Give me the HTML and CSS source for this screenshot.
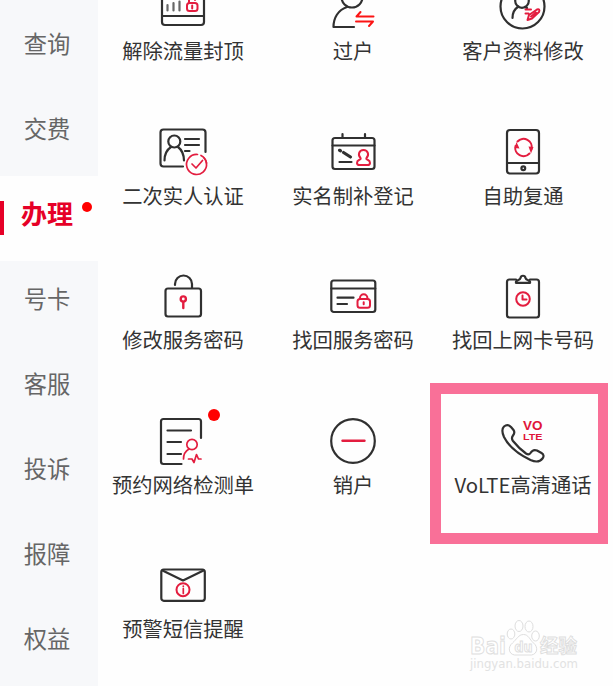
FILE: index.html
```html
<!DOCTYPE html>
<html lang="zh-CN">
<head>
    <meta charset="UTF-8">
    <meta name="viewport" content="width=device-width, initial-scale=1.0">
    <title>业务办理</title>
    <link rel="stylesheet" href="styles.css">
</head>
<body>
    <div class="container">
        <nav class="sidebar">
            <a class="tab">查询</a>
            <a class="tab">交费</a>
            <a class="tab active">办理<span class="dot"></span></a>
            <a class="tab">号卡</a>
            <a class="tab">客服</a>
            <a class="tab">投诉</a>
            <a class="tab">报障</a>
            <a class="tab">权益</a>
        </nav>

        <main class="services">
            <div class="service">
                <svg class="icon" viewBox="0 0 60 60">
                    <rect x="9" y="13" width="42" height="35" rx="3"/>
                    <path d="M9 39h42"/>
                    <path class="bars" d="M14.500 28v5.500M20.500 26v7.500M26.500 24.500v9"/>
                    <g class="red"><rect x="34" y="26" width="10.500" height="8" rx="2.500"/><path d="M36 26v-3a3 3 0 0 1 6 0M39.200 28.500v3"/></g>
                </svg>
                <span class="label">解除流量封顶</span>
            </div>
            <div class="service">
                <svg class="icon" viewBox="0 0 60 60">
                    <circle cx="29" cy="20" r="10.500"/>
                    <path d="M24 30C15 33 10.500 41 10.500 50H31"/>
                    <path class="red bright" d="M50.500 39.500H33.500l4-4.500M33 44.500h17l-4 4.500"/>
                </svg>
                <span class="label">过户</span>
            </div>
            <div class="service">
                <svg class="icon" viewBox="0 0 60 60">
                    <circle cx="29.500" cy="29.500" r="22"/>
                    <circle cx="29" cy="24" r="6.800"/>
                    <path d="M25.500 29.500C21.500 32 19.500 36 19.500 41M32 30l2 1"/>
                    <path class="red" d="M32.500 32.500h5.500M32.500 36.500h3M34.500 43l1.500-5 8-5.500c2-1 3 .5 2 2.500l-7 6.500zM38 39.500l5-4"/>
                </svg>
                <span class="label">客户资料修改</span>
            </div>

            <div class="service">
                <svg class="icon" viewBox="0 0 60 60">
                    <path d="M30 44.500H10.500a3 3 0 0 1-3-3V10.500a3 3 0 0 1 3-3h39a3 3 0 0 1 3 3V30"/>
                    <circle cx="21.300" cy="19.500" r="6"/>
                    <path d="M18 25C13.500 28 11.500 32 11.500 38.500M25 25c4 3 5.800 7 6 13.500M32 17h14M32 23h14M32 29h4.500"/>
                    <g class="red thin"><path d="M48 33.500A10 10 0 1 1 44.500 32.500M39 42l4 4 6.500-7.500"/><path d="M51 36q2 2 2.500 5"/></g>
                </svg>
                <span class="label">二次实人认证</span>
            </div>
            <div class="service">
                <svg class="icon" viewBox="0 0 60 60">
                    <rect x="9.500" y="16" width="42" height="31" rx="2.500"/>
                    <path d="M9.500 23.500h42M19.500 12v4M42 12v4M16.500 40h12"/>
                    <path class="pen" d="M16.500 28.300l1 .5M20.500 30.500l7 4.500"/>
                    <path class="red" d="M37.500 36c-3-3-1.500-8 3-8s6 5 3 8c-.5 1 0 1.500 1.500 2 2.500 1 3 5-.5 5H36.500c-3.500 0-3-4-.5-5 1.500-.5 2-1 1.500-2z"/>
                </svg>
                <span class="label">实名制补登记</span>
            </div>
            <div class="service">
                <svg class="icon" viewBox="0 0 60 60">
                    <rect x="14" y="8" width="32" height="43.500" rx="3"/>
                    <path d="M14 41h32"/>
                    <circle cx="30.300" cy="46.300" r="1.900"/>
                    <path class="red" d="M24.500 19.500A8.200 8.200 0 0 1 38.500 27M36.500 31.500A8.200 8.200 0 0 1 22.500 24"/>
                    <path class="red-fill" d="M35.500 24.500l5 .5-2.500 6.500zM21.500 26l2-6 3 6.500z"/>
                </svg>
                <span class="label">自助复通</span>
            </div>

            <div class="service">
                <svg class="icon" viewBox="0 0 60 60">
                    <rect x="12.500" y="22.500" width="35.500" height="28" rx="2.500"/>
                    <path d="M22 19v-1a8.500 8.500 0 0 1 17 0v4"/>
                    <g class="red key"><circle cx="30.300" cy="33" r="2.600"/><path d="M30.300 36v6"/></g>
                </svg>
                <span class="label">修改服务密码</span>
            </div>
            <div class="service">
                <svg class="icon" viewBox="0 0 60 60">
                    <rect x="8.300" y="14.500" width="44" height="31.500" rx="2.500"/>
                    <path d="M8.300 22.500h44M14.500 31.700h16M14.500 38h9.500"/>
                    <g class="red"><rect x="34.500" y="33" width="12.500" height="8.700" rx="2.500"/><path d="M37 33v-1a3.700 3.700 0 0 1 7.400 0v1M40.700 36.300v2"/></g>
                </svg>
                <span class="label">找回服务密码</span>
            </div>
            <div class="service">
                <svg class="icon" viewBox="0 0 60 60">
                    <path d="M23 13.500h-6.500a2.500 2.500 0 0 0-2.500 2.500v33a2.500 2.500 0 0 0 2.500 2.500h27a2.500 2.500 0 0 0 2.500-2.500v-33a2.500 2.500 0 0 0-2.500-2.500H37"/>
                    <path d="M23 16.800c-1-3 4-1.800 4.500-4.800.5-3 4.500-3 5 0 .5 3 5.500 1.800 4.500 4.800z"/>
                    <g class="red"><circle cx="30" cy="33" r="6.800"/><path d="M29.500 29.500v4h4"/></g>
                </svg>
                <span class="label">找回上网卡号码</span>
            </div>

            <div class="service">
                <svg class="icon" viewBox="0 0 60 60">
                    <path d="M28.500 53H10.500a2.500 2.500 0 0 1-2.500-2.500v-40a2.500 2.500 0 0 1 2.500-2.500h35a2.500 2.500 0 0 1 2.500 2.500V27M14.500 19.500H38M14.500 31h13.500M14.500 43h13.500"/>
                    <g class="red thin"><circle cx="39" cy="33.500" r="5.200"/><path d="M36 38c-3.500 2-5.500 5-5.500 10M35.500 48h3.500l2 3.500 2.500-8 2 4.500h2.500"/></g>
                </svg>
                <span class="dot"></span>
                <span class="label">预约网络检测单</span>
            </div>
            <div class="service">
                <svg class="icon" viewBox="0 0 60 60">
                    <circle cx="30" cy="30" r="21.800"/>
                    <path class="red key" d="M19.500 29.800h22"/>
                </svg>
                <span class="label">销户</span>
            </div>
            <div class="service">
                <svg class="icon" viewBox="0 0 60 60">
                    <path d="M11 15.500c2.500-2 5-1.500 7 .5l2.500 3c1.500 2 1 3.500-.5 5.500-1.500 2-1.500 3.500 0 5.500 4 5 8 9 13 12.500 2 1.300 3.500 1 4.500-.5 1.500-2.500 4-3.500 6.500-2.500l4.500 2.500c2.500 1.500 2.500 3.500 1 5.500-3 4-7.500 3.500-12 1.500C25 43 15.500 35 11 26c-2-4.500-2.500-8 0-10.500z"/>
                    <text class="volte-top" x="30" y="19.300" textLength="19.500" lengthAdjust="spacingAndGlyphs">VO</text>
                    <text class="volte-bottom" x="30" y="29.300" textLength="19.500" lengthAdjust="spacingAndGlyphs">LTE</text>
                </svg>
                <span class="label">VoLTE高清通话</span>
                <div class="highlight"></div>
            </div>

            <div class="service">
                <svg class="icon" viewBox="0 0 60 60">
                    <rect x="8.300" y="14.500" width="43.500" height="31.300" rx="2.500"/>
                    <path d="M9.500 15.500L30 25.500 50.500 15.500"/>
                    <g class="red"><circle cx="30" cy="34.700" r="6.500"/><path class="thin" d="M30.300 31v.5M30.300 33.500v5"/></g>
                </svg>
                <span class="label">预警短信提醒</span>
            </div>
        </main>
    </div>

    <div class="watermark">
        <svg viewBox="0 0 120 60">
            <text class="brand" x="3" y="39.500" textLength="36" lengthAdjust="spacingAndGlyphs">Bai</text>
            <ellipse cx="44" cy="20" rx="3.800" ry="5"/>
            <ellipse cx="52" cy="12" rx="4" ry="5.500"/>
            <ellipse cx="62" cy="12.500" rx="4" ry="5.500"/>
            <ellipse cx="68.500" cy="22" rx="3.800" ry="5"/>
            <path d="M56.500 20.500c5 0 6 5 10 8.500 5 4 4 11-2 12h-17c-6-1-7-8-2-12 4-3.500 6-8.500 11-8.500z"/>
            <text class="du" x="47.500" y="38" textLength="18" lengthAdjust="spacingAndGlyphs">du</text>
            <text class="brand cn" x="73" y="39" textLength="37" lengthAdjust="spacingAndGlyphs">经验</text>
            <text class="url" x="3" y="54" textLength="108" lengthAdjust="spacingAndGlyphs">jingyan.baidu.com</text>
        </svg>
    </div>
</body>
</html>
```

FILE: styles.css
```css
* {
    box-sizing: border-box;
}
body {
    font-family: "Noto Sans CJK SC", "Noto Sans", sans-serif;
    margin: 0;
    height: 686px;
    overflow: hidden;
    background: #fefefe;
    color: #333;
}
.container {
    display: flex;
    width: 608px;
    height: 686px;
    overflow: hidden;
}
.sidebar {
    width: 98px;
    flex-shrink: 0;
    padding-top: 6px;
    background: #f7f8fa;
}
.tab {
    display: flex;
    position: relative;
    align-items: center;
    justify-content: center;
    height: 85px;
    padding: 0 4px 12px 0;
    font-size: 23.3px;
    line-height: 30px;
    color: #666;
}
.tab.active {
    background: #fefefe;
    font-size: 26px;
    font-weight: bold;
    color: #e60027;
}
.tab.active::before {
    content: "";
    position: absolute;
    left: 0;
    top: 25px;
    width: 4px;
    height: 34px;
    background: #e60027;
}
.dot {
    position: absolute;
    width: 12px;
    height: 12px;
    border-radius: 50%;
    background: #ff0000;
}
.tab .dot {
    width: 10px;
    height: 10px;
    left: 82px;
    top: 26px;
}
.services {
    display: grid;
    grid-template-columns: repeat(3, 170px);
    grid-auto-rows: 144.5px;
    /* list is scrolled, first row is cut off at the top */
    margin-top: -61px;
}
.service {
    display: flex;
    position: relative;
    flex-direction: column;
    align-items: center;
    padding-top: 38px;
}
.service .dot {
    left: 110px;
    top: 36px;
}
.icon {
    width: 60px;
    height: 60px;
    flex-shrink: 0;
    fill: none;
    stroke: #303030;
    stroke-width: 2.2;
    stroke-linecap: round;
    stroke-linejoin: round;
}
.icon .red {
    stroke: #e31d3f;
    stroke-width: 2;
}
.icon .bright {
    stroke: #fb1414;
}
.icon .key {
    stroke-width: 2.4;
}
.icon .thin {
    stroke-width: 1.7;
}
.icon .pen {
    stroke-width: 3.2;
}
.icon .bars {
    stroke: #666;
}
.icon .red-fill {
    fill: #e31d3f;
    stroke: none;
}
.icon text {
    font-family: "Liberation Sans", sans-serif;
    font-weight: bold;
    fill: #e0163a;
    stroke: none;
}
.volte-top {
    font-size: 12.5px;
}
.volte-bottom {
    font-size: 8.8px;
}
.label {
    margin-top: -1px;
    font-size: 20.3px;
    line-height: 28px;
    white-space: nowrap;
}
.highlight {
    position: absolute;
    left: -8px;
    top: 10.5px;
    width: 178px;
    height: 161px;
    border: 11px solid #f97098;
    border-right-width: 10px;
}
.watermark {
    position: absolute;
    left: 467px;
    top: 614px;
    width: 120px;
    height: 60px;
}
.watermark svg {
    display: block;
    fill: #fff;
    stroke: #dedede;
    stroke-width: 1;
}
.brand {
    font-family: "DejaVu Sans", sans-serif;
    font-size: 23px;
    font-weight: bold;
}
.brand.cn {
    font-family: "Noto Sans CJK SC", sans-serif;
    font-size: 19px;
}
.du {
    font-family: "DejaVu Sans", sans-serif;
    font-size: 14px;
    font-weight: bold;
}
.url {
    font-family: "DejaVu Sans", sans-serif;
    font-size: 12px;
    fill: #e2e2e2;
    stroke: none;
}
```
